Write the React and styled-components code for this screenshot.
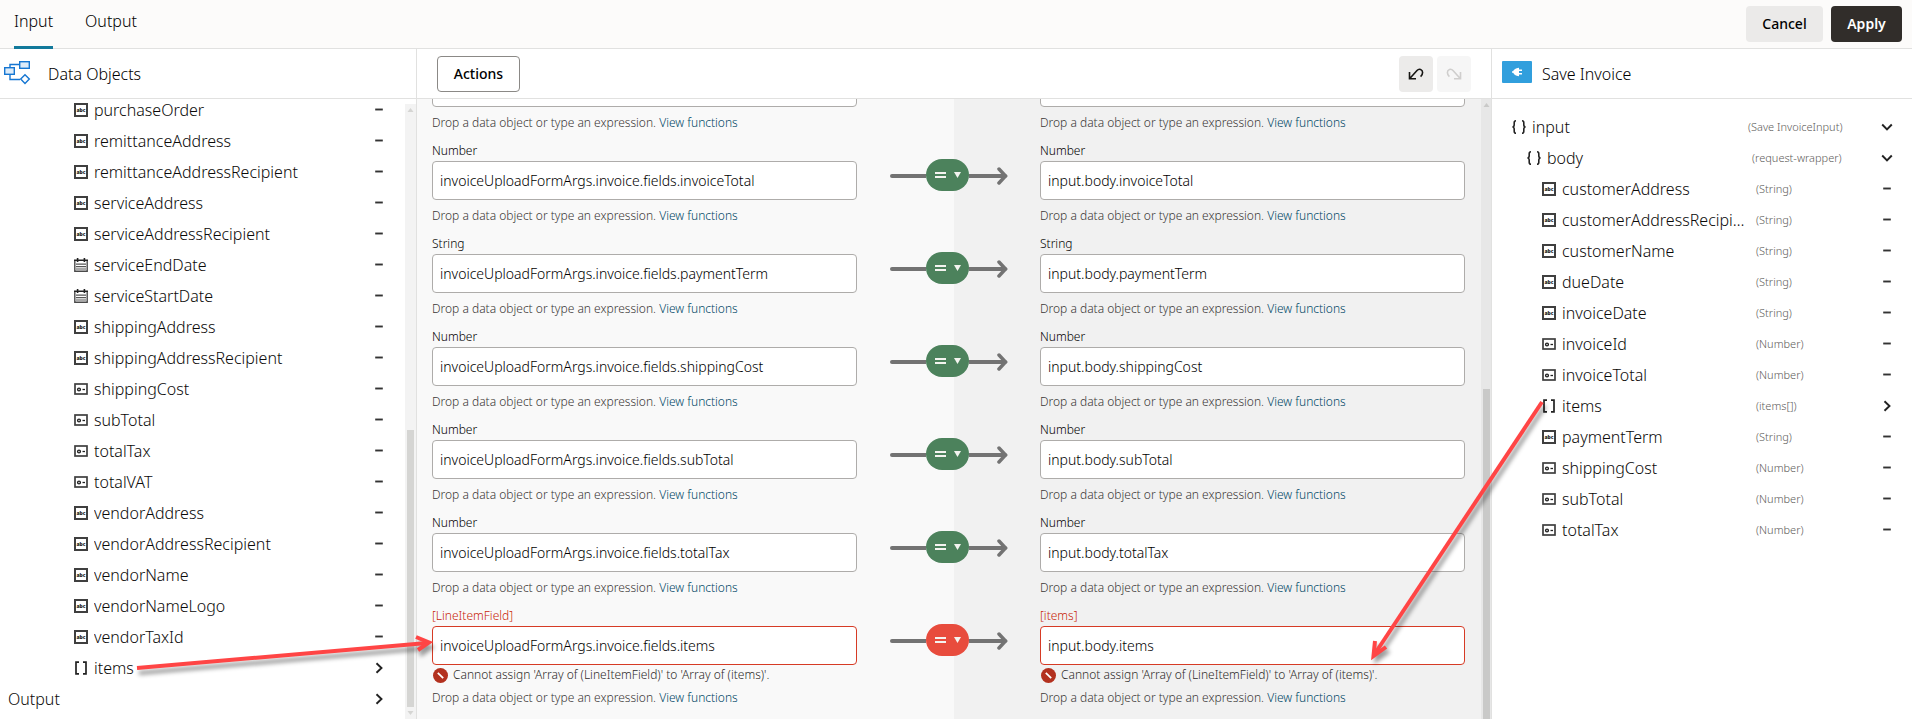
import React from "react";
import styled, { createGlobalStyle, css } from "styled-components";

const GlobalStyle = createGlobalStyle`
  *, *::before, *::after { box-sizing: border-box; }
  body {
    margin: 0;
    background: #fff;
    color: #000;
    font-family: "Noto Sans", "Open Sans", sans-serif;
    font-size: 16px;
    font-weight: 300;
  }
  button, input { font: inherit; color: inherit; }
`;

const line = "#e1e1e0";

/* ---------- page frame ---------- */

const Shell = styled.div`
  position: relative;
  display: flex;
  flex-direction: column;
  height: 100vh;
  overflow: hidden;
`;

const TopBar = styled.header`
  display: flex;
  flex: none;
  justify-content: space-between;
  height: 49px;
  padding: 0 10px 0 14px;
  background: #fcfbfa;
  border-bottom: 1px solid ${line};
`;

const Tabs = styled.nav`
  display: flex;
  gap: 32px;
`;

const Tab = styled.button`
  height: 49px;
  padding: 0 0 5px;
  border: 0;
  border-bottom: 3px solid ${(p) => (p.$active ? "#12799b" : "transparent")};
  background: none;
  line-height: 22px;
`;

const TopActions = styled.div`
  display: flex;
  align-items: center;
  gap: 8px;
`;

const Button = styled.button`
  height: 36px;
  border: 1px solid transparent;
  border-radius: 4px;
  font-size: 14px;
  font-weight: 500;
  line-height: 20px;
  ${(p) =>
    p.$kind === "primary"
      ? css`width: 71px; background: #312d2a; color: #fff; font-weight: 600;`
      : p.$kind === "outlined"
      ? css`width: 83px; background: #fff; border-color: #8b8986;`
      : css`width: 77px; background: #ebeae9;`}
`;

const Columns = styled.main`
  display: flex;
  flex: 1;
  min-height: 0;
`;

const SidePanel = styled.section`
  display: flex;
  flex: none;
  flex-direction: column;
  width: ${(p) => p.$width}px;
  min-height: 0;
  background: #fff;
`;

const PanelHeader = styled.div`
  display: flex;
  flex: none;
  align-items: center;
  gap: ${(p) => p.$gap || 0}px;
  height: 50px;
  padding: 0 20px 0 ${(p) => p.$left}px;
  border-bottom: 1px solid ${line};
  background: #fff;
`;

const PanelTitle = styled.h2`
  margin: 0;
  font-size: 16px;
  font-weight: inherit;
  line-height: 22px;
`;

/* ---------- trees ---------- */

const TreeArea = styled.div`
  display: flex;
  flex: 1;
  min-height: 0;
`;

const TreeScroll = styled.div`
  display: flex;
  flex: 1;
  flex-direction: column;
  justify-content: ${(p) => (p.$end ? "flex-end" : "flex-start")};
  min-width: 0;
  padding: ${(p) => (p.$end ? "0 0 5px" : "12px 0 0")};
  overflow: hidden;
`;

const TreeList = styled.ul`
  margin: 0;
  padding: 0;
  list-style: none;
`;

const TreeRow = styled.li`
  display: flex;
  align-items: center;
  height: 31px;
  padding-left: ${(p) => p.$indent}px;
  padding-right: ${(p) => p.$end}px;
  color: #0b0a09;
`;

const TreeIcon = styled.span`
  display: flex;
  flex: none;
  width: 14px;
  height: 14px;
  margin-right: 6px;
`;

const TreeName = styled.span`
  flex: 1;
  min-width: 0;
  overflow: hidden;
  line-height: 22px;
  text-overflow: ellipsis;
  white-space: nowrap;
`;

const TreeType = styled.span`
  flex: none;
  width: ${(p) => p.$width}px;
  padding-left: 5px;
  color: #5e5c5a;
  font-size: 11px;
  line-height: 16px;
`;

const Toggle = styled.button`
  display: flex;
  flex: none;
  padding: 0;
  border: 0;
  background: none;
`;

/* ---------- scrollbars ---------- */

const ScrollTrack = styled.div`
  display: flex;
  flex: none;
  flex-direction: column;
  align-items: center;
  width: ${(p) => p.$width}px;
  margin-top: ${(p) => p.$top || 0}px;
  background: ${(p) => p.$track};
`;

const ScrollCap = styled.span`
  display: flex;
  flex: none;
  align-items: center;
  height: 12px;
`;

const ScrollSpace = styled.div`
  flex: ${(p) => p.$grow};
`;

const ScrollThumb = styled.div`
  flex: ${(p) => p.$grow};
  width: 7px;
  background: ${(p) => p.$color};
`;

/* ---------- mapper ---------- */

const Mapper = styled.section`
  display: flex;
  flex: 1;
  flex-direction: column;
  min-width: 0;
  border: solid ${line};
  border-width: 0 1px;
`;

const HistoryButtons = styled.div`
  display: flex;
  gap: 4px;
  margin-left: auto;
`;

const HistoryButton = styled.button`
  display: flex;
  align-items: center;
  justify-content: center;
  width: 34px;
  height: 36px;
  padding: 0;
  border: 0;
  border-radius: 4px;
  background: #ecebea;
  color: #161513;
  &:disabled { background: #f6f6f6; color: #cfcecd; }
`;

const MapBody = styled.div`
  display: flex;
  flex: 1;
  min-height: 0;
  background: linear-gradient(90deg, #f9f9f9 50%, #f1f1f1 50%);
`;

const MapScroll = styled.div`
  flex: 1;
  min-width: 0;
  overflow: hidden;
`;

const MapList = styled.div`
  display: flex;
  flex-direction: column;
  gap: 12px;
  margin-top: -49px;
  padding: 0 16px 0 15px;
`;

const MapRow = styled.div`
  display: grid;
  grid-template-columns: 1fr 183px 1fr;
`;

const Field = styled.div`
  display: flex;
  flex-direction: column;
  min-width: 0;
`;

const FieldLabel = styled.label`
  margin-bottom: 2px;
  color: ${(p) => (p.$error ? "#c81e08" : "#000")};
  font-size: 12px;
  line-height: 16px;
`;

const FieldInput = styled.input`
  width: 100%;
  height: 39px;
  padding: 0 7px;
  border: 1px solid ${(p) => (p.$error ? "#d63b25" : "#aeacaa")};
  border-radius: 4px;
  background: #fff;
  font-size: 14px;
`;

const Message = styled.p`
  display: flex;
  align-items: center;
  gap: 5px;
  margin: 2px 0 0;
  padding-left: 1px;
  color: #2e2b29;
  font-size: 12px;
  line-height: 16px;
`;

const Hint = styled.p`
  margin: ${(p) => (p.$error ? 7 : 8)}px 0 0;
  color: #3a3735;
  font-size: 12px;
  line-height: 16px;
`;

const HintLink = styled.a`
  color: #004766;
  text-decoration: none;
`;

const Connector = styled.div`
  display: flex;
  align-items: center;
  height: 32px;
  margin: 16px 0 0 33px;
`;

const Operator = styled.button`
  display: flex;
  align-items: center;
  justify-content: center;
  gap: 8px;
  width: 43px;
  height: 32px;
  padding: 0;
  border: 0;
  border-radius: 16px;
  background: ${(p) => (p.$error ? "#e84c3d" : "#4c825c")};
`;

const LeftArrow = styled.svg`
  position: absolute;
  top: 630px;
  left: 130px;
  pointer-events: none;
  filter: drop-shadow(2px 5px 2px rgba(0, 0, 0, 0.4));
`;

const RightArrow = styled.svg`
  position: absolute;
  top: 395px;
  right: 360px;
  pointer-events: none;
  filter: drop-shadow(3px 4px 2px rgba(0, 0, 0, 0.4));
`;

/* ---------- icons ---------- */

const StringIcon = () => (
  <svg width="14" height="14" viewBox="0 0 14 14" aria-hidden="true">
    <rect x="1" y="1" width="12" height="12" fill="#fff" stroke="#3f3f3f" strokeWidth="2" />
    <text x="7" y="9" textAnchor="middle" fontFamily="Open Sans" fontSize="5" fontWeight="800" fill="#222">abc</text>
  </svg>
);

const NumberIcon = () => (
  <svg width="14" height="14" viewBox="0 0 14 14" aria-hidden="true">
    <rect x="1" y="2" width="12" height="10" fill="#fff" stroke="#3f3f3f" strokeWidth="1.7" />
    <circle cx="5" cy="7.5" r="1.4" fill="none" stroke="#222" strokeWidth="1.4" />
    <path d="M8.5 7.5H11" stroke="#222" strokeWidth="1.3" />
  </svg>
);

const DateIcon = () => (
  <svg width="14" height="14" viewBox="0 0 14 14" aria-hidden="true">
    <path d="M0.8 3V13.2H13.2V3" fill="#fff" stroke="#4a4a4a" strokeWidth="1.4" />
    <path d="M0 2.2H14M3.6 0V4M10.4 0V4" stroke="#222" strokeWidth="1.6" />
    <path d="M2 6.2H12M2 8.6H12M2 11H12" stroke="#555" strokeWidth="1.2" />
  </svg>
);

const ArrayIcon = () => (
  <svg width="14" height="14" viewBox="0 0 14 14" fill="none" stroke="#222" strokeWidth="1.7" aria-hidden="true">
    <path d="M5 1.2H2V12.8H5M9 1.2H12V12.8H9" />
  </svg>
);

const ObjectIcon = () => (
  <svg width="14" height="14" viewBox="0 0 14 14" fill="none" stroke="#222" strokeWidth="1.6" aria-hidden="true">
    <path d="M4 .8C2.4 .8 2.2 1.6 2.2 2.8V4.8C2.2 6.2 1.6 7 .4 7C1.6 7 2.2 7.8 2.2 9.2V11.2C2.2 12.4 2.4 13.2 4 13.2" />
    <path d="M10 .8C11.6 .8 11.8 1.6 11.8 2.8V4.8C11.8 6.2 12.4 7 13.6 7C12.4 7 11.8 7.8 11.8 9.2V11.2C11.8 12.4 11.6 13.2 10 13.2" />
  </svg>
);

const icons = { string: StringIcon, number: NumberIcon, date: DateIcon, array: ArrayIcon, object: ObjectIcon };

const Glyph = ({ kind }) => (
  <svg width="12" height="12" viewBox="0 0 12 12" fill="none" stroke="#222" strokeWidth="1.9" aria-hidden="true">
    {kind === "leaf" && <path d="M2.2 5.5H9.8" stroke="#333" />}
    {kind === "closed" && <path d="M3.5 1.2L8.5 6L3.5 10.8" />}
    {kind === "open" && <path d="M1.2 3.5L6 8.5L10.8 3.5" />}
  </svg>
);

const FlowIcon = () => (
  <svg width="28" height="26" viewBox="0 1 28 26" stroke="#1576d2" strokeWidth="1.4" aria-hidden="true">
    <path d="M7 8V4.5H16M7 15V19.5H17" fill="none" />
    <rect x="16.7" y="1.7" width="9.6" height="6.6" fill="#dcebf9" />
    <rect x="1.7" y="7.7" width="9.6" height="6.6" fill="#dcebf9" />
    <path d="M22 14.8L26.3 19L22 23.4L17.7 19Z" fill="#fff" />
  </svg>
);

const ConnectorIcon = () => (
  <svg width="30" height="25" viewBox="0 0 30 25" aria-hidden="true">
    <rect width="30" height="22" rx="1" fill="#319fdd" />
    <path d="M10 11H12M16 9.2H20M16 12.8H20" stroke="#fff" strokeWidth="1.4" />
    <path d="M17 6.8V15.2C13.5 15 11.8 13.4 11 11C11.8 8.6 13.5 7 17 6.8Z" fill="#fff" />
  </svg>
);

const UndoIcon = () => (
  <svg width="16" height="14" viewBox="0 0 16 14" fill="none" stroke="currentColor" strokeWidth="1.6" aria-hidden="true">
    <path d="M1.5 5V11.8H8M1.8 11.5L9 3.5C11 1.2 14.6 2.2 14.6 5.6C14.6 7.4 13.8 8.6 12.6 9.6" />
  </svg>
);

const RedoIcon = () => (
  <svg width="16" height="14" viewBox="0 0 16 14" fill="none" stroke="currentColor" strokeWidth="1.6" aria-hidden="true">
    <path d="M14.5 5V11.8H8M14.2 11.5L7 3.5C5 1.2 1.4 2.2 1.4 5.6C1.4 7.4 2.2 8.6 3.4 9.6" />
  </svg>
);

const ErrorIcon = () => (
  <svg width="15" height="15" viewBox="0 0 15 15" aria-hidden="true">
    <circle cx="7.5" cy="7.5" r="7.5" fill="#b3311f" />
    <path d="M4.8 4.8L10.2 10.2" stroke="#fff" strokeWidth="1.8" />
  </svg>
);

const ShaftIcon = () => (
  <svg width="36" height="16" viewBox="0 0 36 16" aria-hidden="true">
    <path d="M2 9H36" stroke="#737373" strokeWidth="4" strokeLinecap="round" />
  </svg>
);

const HeadIcon = () => (
  <svg width="40" height="20" viewBox="0 0 40 20" fill="none" stroke="#737373" strokeLinecap="round" aria-hidden="true">
    <path d="M0 11H36" strokeWidth="4" />
    <path d="M30 4L36.5 11L30 18" strokeWidth="3.5" />
  </svg>
);

const CapArrow = ({ up, color }) => (
  <svg width="7" height="4" viewBox="0 0 7 4" aria-hidden="true">
    <path d={up ? "M0.5 4L3.5 0L6.5 4Z" : "M0.5 0L3.5 4L6.5 0Z"} fill={color} />
  </svg>
);

/* ---------- data ---------- */

const objects = [
  ["purchaseOrder", "string"],
  ["remittanceAddress", "string"],
  ["remittanceAddressRecipient", "string"],
  ["serviceAddress", "string"],
  ["serviceAddressRecipient", "string"],
  ["serviceEndDate", "date"],
  ["serviceStartDate", "date"],
  ["shippingAddress", "string"],
  ["shippingAddressRecipient", "string"],
  ["shippingCost", "number"],
  ["subTotal", "number"],
  ["totalTax", "number"],
  ["totalVAT", "number"],
  ["vendorAddress", "string"],
  ["vendorAddressRecipient", "string"],
  ["vendorName", "string"],
  ["vendorNameLogo", "string"],
  ["vendorTaxId", "string"],
  ["items", "array", "closed"],
];

const targets = [
  ["input", "object", "(Save InvoiceInput)", 0, "open"],
  ["body", "object", "(request-wrapper)", 1, "open"],
  ["customerAddress", "string", "(String)", 2],
  ["customerAddressRecipient", "string", "(String)", 2],
  ["customerName", "string", "(String)", 2],
  ["dueDate", "string", "(String)", 2],
  ["invoiceDate", "string", "(String)", 2],
  ["invoiceId", "number", "(Number)", 2],
  ["invoiceTotal", "number", "(Number)", 2],
  ["items", "array", "(items[])", 2, "closed"],
  ["paymentTerm", "string", "(String)", 2],
  ["shippingCost", "number", "(Number)", 2],
  ["subTotal", "number", "(Number)", 2],
  ["totalTax", "number", "(Number)", 2],
];

const mismatch = "Cannot assign 'Array of (LineItemField)' to 'Array of (items)'.";

const mappings = [
  { name: "invoiceId", type: "Number" },
  { name: "invoiceTotal", type: "Number" },
  { name: "paymentTerm", type: "String" },
  { name: "shippingCost", type: "Number" },
  { name: "subTotal", type: "Number" },
  { name: "totalTax", type: "Number" },
  { name: "items", type: "[LineItemField]", targetType: "[items]", error: mismatch },
];

/* ---------- parts ---------- */

function Scrollbar({ width, top, track, thumb, before, size, down }) {
  return (
    <ScrollTrack $width={width} $top={top} $track={track} aria-hidden="true">
      <ScrollCap><CapArrow up color={thumb} /></ScrollCap>
      <ScrollSpace $grow={before} />
      <ScrollThumb $grow={size} $color={thumb} />
      {down && <ScrollCap><CapArrow color={thumb} /></ScrollCap>}
    </ScrollTrack>
  );
}

function TreeItem({ name, icon, type, typeWidth, indent, end, state = "leaf" }) {
  const Icon = icons[icon];
  return (
    <TreeRow $indent={indent} $end={end}>
      {Icon && <TreeIcon><Icon /></TreeIcon>}
      <TreeName>{name}</TreeName>
      {type && <TreeType $width={typeWidth}>{type}</TreeType>}
      {state === "leaf" ? (
        <Glyph kind="leaf" />
      ) : (
        <Toggle aria-label={`Toggle ${name}`}><Glyph kind={state} /></Toggle>
      )}
    </TreeRow>
  );
}

function Expression({ id, label, value, error }) {
  return (
    <Field>
      <FieldLabel htmlFor={id} $error={error}>{label}</FieldLabel>
      <FieldInput id={id} defaultValue={value} $error={error} />
      {error && <Message><ErrorIcon />{error}</Message>}
      <Hint $error={error}>
        Drop a data object or type an expression. <HintLink href="#functions">View functions</HintLink>
      </Hint>
    </Field>
  );
}

function Mapping({ name, type, targetType, error }) {
  return (
    <MapRow>
      <Expression id={`source-${name}`} label={type} value={`invoiceUploadFormArgs.invoice.fields.${name}`} error={error} />
      <Connector>
        <ShaftIcon />
        <Operator aria-label="Change operator" $error={error}>
          <svg width="11" height="6" viewBox="0 0 11 6" aria-hidden="true">
            <path d="M0 1H11M0 5H11" stroke="#f4f4f0" strokeWidth="2" />
          </svg>
          <svg width="7" height="6" viewBox="0 0 7 6" aria-hidden="true">
            <path d="M0 0H7L3.5 6Z" fill="#f4f4f0" />
          </svg>
        </Operator>
        <HeadIcon />
      </Connector>
      <Expression id={`target-${name}`} label={targetType || type} value={`input.body.${name}`} error={error} />
    </MapRow>
  );
}

export default function App() {
  return (
    <>
      <GlobalStyle />
      <Shell>
        <TopBar>
          <Tabs>
            <Tab $active>Input</Tab>
            <Tab>Output</Tab>
          </Tabs>
          <TopActions>
            <Button>Cancel</Button>
            <Button $kind="primary">Apply</Button>
          </TopActions>
        </TopBar>

        <Columns>
          <SidePanel $width={416}>
            <PanelHeader $left={3} $gap={17}>
              <FlowIcon />
              <PanelTitle>Data Objects</PanelTitle>
            </PanelHeader>
            <TreeArea>
              <TreeScroll $end>
                <TreeList>
                  {objects.map(([name, icon, state]) => (
                    <TreeItem key={name} name={name} icon={icon} state={state} indent={74} end={20} />
                  ))}
                  <TreeItem name="Output" state="closed" indent={8} end={20} />
                </TreeList>
              </TreeScroll>
              <Scrollbar width={11} top={5} track="#f3f3f3" thumb="#d5d5d3" before={316} size={279} down />
            </TreeArea>
          </SidePanel>

          <Mapper>
            <PanelHeader $left={20}>
              <Button $kind="outlined">Actions</Button>
              <HistoryButtons>
                <HistoryButton aria-label="Undo"><UndoIcon /></HistoryButton>
                <HistoryButton aria-label="Redo" disabled><RedoIcon /></HistoryButton>
              </HistoryButtons>
            </PanelHeader>
            <MapBody>
              <MapScroll>
                <MapList>
                  {mappings.map((m) => <Mapping key={m.name} {...m} />)}
                </MapList>
              </MapScroll>
              <Scrollbar width={10} track="#e7e7e7" thumb="#c9c9c8" before={278} size={330} />
            </MapBody>
          </Mapper>

          <SidePanel $width={420}>
            <PanelHeader $left={10} $gap={10}>
              <ConnectorIcon />
              <PanelTitle>Save Invoice</PanelTitle>
            </PanelHeader>
            <TreeArea>
              <TreeScroll>
                <TreeList>
                  {targets.map(([name, icon, type, depth, state]) => (
                    <TreeItem
                      key={name}
                      name={name}
                      icon={icon}
                      type={type}
                      typeWidth={138 - 4 * depth}
                      indent={20 + 15 * depth}
                      end={19}
                      state={state}
                    />
                  ))}
                </TreeList>
              </TreeScroll>
            </TreeArea>
          </SidePanel>
        </Columns>

        <LeftArrow width="310" height="50" viewBox="0 0 310 50" fill="none" stroke="#ff4545" strokeWidth="4" aria-hidden="true">
          <path d="M7 38L297 13" />
          <path d="M286 7L299 12.5L288 20" />
        </LeftArrow>
        <RightArrow width="190" height="275" viewBox="0 0 190 275" fill="none" stroke="#ff4545" strokeWidth="4" aria-hidden="true">
          <path d="M180 7L12 260" />
          <path d="M13 246L11.5 261L24 252" />
        </RightArrow>
      </Shell>
    </>
  );
}
